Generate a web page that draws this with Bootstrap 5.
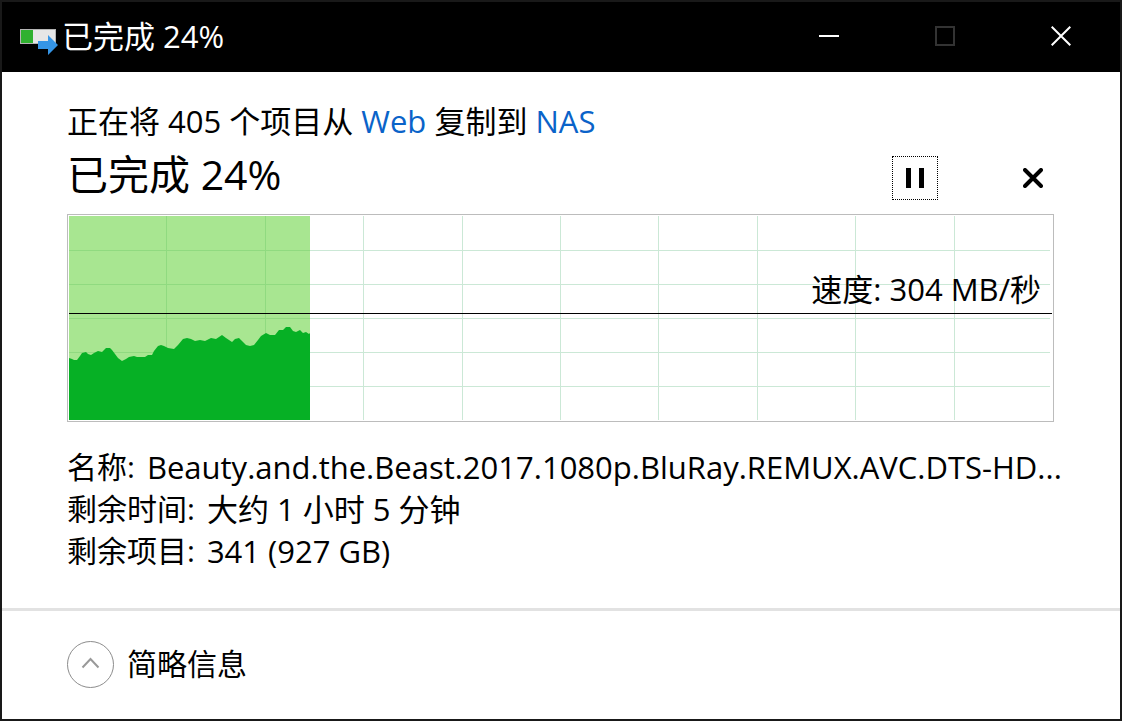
<!DOCTYPE html>
<html lang="zh-CN">
<head>
<meta charset="utf-8">
<meta name="viewport" content="width=device-width, initial-scale=1">
<title>已完成 24%</title>
<link href="https://cdn.jsdelivr.net/npm/bootstrap@5.3.0/dist/css/bootstrap.min.css" rel="stylesheet">
<style>
  body { font-family: "Open Sans", "Noto Sans CJK SC", sans-serif; font-size: 31px; line-height: 42px; color: #000; }
  .copy-window { border: 2px solid #191919; background: #fff; }
  .title-bar { height: 70px; background: #000; color: #fff; padding: 0 1px 2px 18px; }
  .title-text { font-size: 31px; line-height: 42px; }
  .caption-btn { width: 116px; border: 0; border-radius: 0; padding: 0; color: #fff; background: transparent; }
  .caption-btn:hover { background: #333; color: #fff; }
  .caption-btn:disabled { color: #333; border: 0; opacity: 1; }
  .window-body { padding: 28px 66px 34px 65px; }
  .summary a { color: #0a63c9; text-decoration: none; }
  .status-row { height: 56px; margin: 8px 0; }
  .status-text { font-size: 41px; line-height: 48px; }
  .action-list { gap: 76px; }
  .tool-btn { width: 42px; height: 40px; border: 0; padding: 0; background: transparent; color: #000; }
  .tool-btn.is-focused { outline: 1px dotted #000; outline-offset: 1px; border-radius: 0; }
  .speed-chart { height: 208px; border: 1px solid #bcbcbc; padding: 1px; }
  .speed-label { right: 12px; top: 53px; }
  .details { margin: 24px 0 0; }
  .details dt { font-size: 30px; font-weight: 400; }
  .details > div { gap: 12px; }
  .window-foot { height: 111px; border-top: 3px solid #e2e2e2; padding: 0 65px 2px; }
  .less-btn { border: 0; padding: 0; background: transparent; color: #000; gap: 13px; font-size: 30px; }
</style>
</head>
<body>
<div class="copy-window min-vh-100 d-flex flex-column">
  <header class="title-bar d-flex align-items-stretch">
    <div class="d-flex align-items-center flex-grow-1">
      <svg width="38" height="38" viewBox="0 0 38 38" aria-hidden="true">
        <rect x="0.500" y="12.500" width="35" height="14" fill="#e6e6e6" stroke="#b4b4b4"/>
        <rect x="1" y="13" width="12" height="13" fill="#2fb12f"/>
        <path d="M18 24h10v-6l10 10-10 10v-6H18z" fill="#3595e6"/>
      </svg>
      <h1 class="title-text fw-normal mb-0 ms-1">已完成 24%</h1>
    </div>
    <button type="button" class="caption-btn btn" aria-label="最小化">
      <svg class="d-block mx-auto" width="20" height="20" viewBox="0 0 20 20"><path d="M0 10h20" stroke="currentColor" stroke-width="2"/></svg>
    </button>
    <button type="button" class="caption-btn btn" aria-label="最大化" disabled>
      <svg class="d-block mx-auto" width="20" height="20" viewBox="0 0 20 20"><rect x="1" y="1" width="18" height="18" fill="none" stroke="currentColor" stroke-width="2"/></svg>
    </button>
    <button type="button" class="caption-btn btn" aria-label="关闭">
      <svg class="d-block mx-auto" width="20" height="20" viewBox="0 0 20 20"><path d="M.7.7l18.600 18.600M19.300.7L.7 19.300" stroke="currentColor" stroke-width="2"/></svg>
    </button>
  </header>

  <main class="window-body flex-grow-1">
    <p class="summary mb-0">正在将 405 个项目从 <a href="#">Web</a> 复制到 <a href="#">NAS</a></p>
    <div class="status-row d-flex justify-content-between align-items-center">
      <h2 class="status-text fw-normal mb-0 align-self-start">已完成 24%</h2>
      <div class="action-list d-flex">
        <button type="button" class="tool-btn is-focused" aria-label="暂停">
          <svg class="d-block mx-auto" width="18" height="20" viewBox="0 0 18 20"><path d="M0 0h5v20H0zM13 0h5v20h-5z" fill="currentColor"/></svg>
        </button>
        <button type="button" class="tool-btn" aria-label="取消">
          <svg class="d-block mx-auto" width="20" height="20" viewBox="0 0 20 20"><path d="M2 2l16 16M18 2L2 18" stroke="currentColor" stroke-width="4" stroke-linecap="round"/></svg>
        </button>
      </div>
    </div>

    <div class="speed-chart position-relative">
      <svg class="d-block w-100 h-100" viewBox="0 0 983 204" preserveAspectRatio="none" aria-hidden="true">
        <path d="M0 34.500h981M0 68.500h981M0 102.500h981M0 136.500h981M0 170.500h981M97.500 0v204M196.500 0v204M294.500 0v204M393.500 0v204M491.500 0v204M589.500 0v204M688.500 0v204M786.500 0v204M885.500 0v204" stroke="#cbe8d6" fill="none"/>
        <rect width="241" height="204" fill="#a8e691"/>
        <path d="M0 34.500h241M0 68.500h241M0 102.500h241M0 136.500h241M97.500 0v204M196.500 0v204" stroke="#90da80" fill="none"/>
        <path id="speed-area" fill="#06b025"/>
        <path d="M0 97.500h983" stroke="#000"/>
      </svg>
      <div class="speed-label position-absolute">速度: 304 MB/秒</div>
    </div>

    <dl class="details">
      <div class="d-flex"><dt class="text-nowrap">名称:</dt><dd class="mb-0 text-nowrap">Beauty.and.the.Beast.2017.1080p.BluRay.REMUX.AVC.DTS-HD...</dd></div>
      <div class="d-flex"><dt>剩余时间:</dt><dd class="mb-0">大约 1 小时 5 分钟</dd></div>
      <div class="d-flex"><dt>剩余项目:</dt><dd class="mb-0">341 (927 GB)</dd></div>
    </dl>
  </main>

  <footer class="window-foot d-flex align-items-center">
    <button type="button" class="less-btn d-flex align-items-center">
      <svg width="47" height="47" viewBox="0 0 47 47" fill="none" aria-hidden="true"><circle cx="23.500" cy="23.500" r="23" stroke="#8c8c8c"/><path d="M15.500 26.500l8-8.500 8 8.500" stroke="#999" stroke-width="2"/></svg>
      <span>简略信息</span>
    </button>
  </footer>
</div>
<script src="https://cdn.jsdelivr.net/npm/bootstrap@5.3.0/dist/js/bootstrap.bundle.min.js"></script>
<script>
  // Transfer speed samples: [x, y] in chart units
  const samples = [[0,142],[3,143],[5,144],[8,144],[11,140],[13,137],[17,136],[19,138],[22,139],[25,137],[29,135],[33,136],[35,134],[37,132],[41,132],[43,134],[46,138],[49,142],[53,145],[57,143],[60,141],[65,140],[68,141],[76,141],[79,139],[83,139],[85,135],[89,130],[92,129],[95,130],[99,132],[105,133],[109,129],[114,123],[118,122],[122,123],[126,125],[131,124],[136,125],[142,122],[147,123],[150,121],[153,119],[157,122],[160,124],[163,126],[166,123],[170,122],[173,125],[177,129],[181,130],[185,129],[189,124],[192,120],[197,117],[201,119],[206,119],[210,114],[214,114],[217,111],[221,111],[224,115],[227,116],[231,114],[234,117],[237,116],[240,118],[241,117]];
  document.getElementById('speed-area').setAttribute('d', 'M0 204L' + samples.map(p => p.join(' ')).join('L') + 'V204Z');
</script>
</body>
</html>
